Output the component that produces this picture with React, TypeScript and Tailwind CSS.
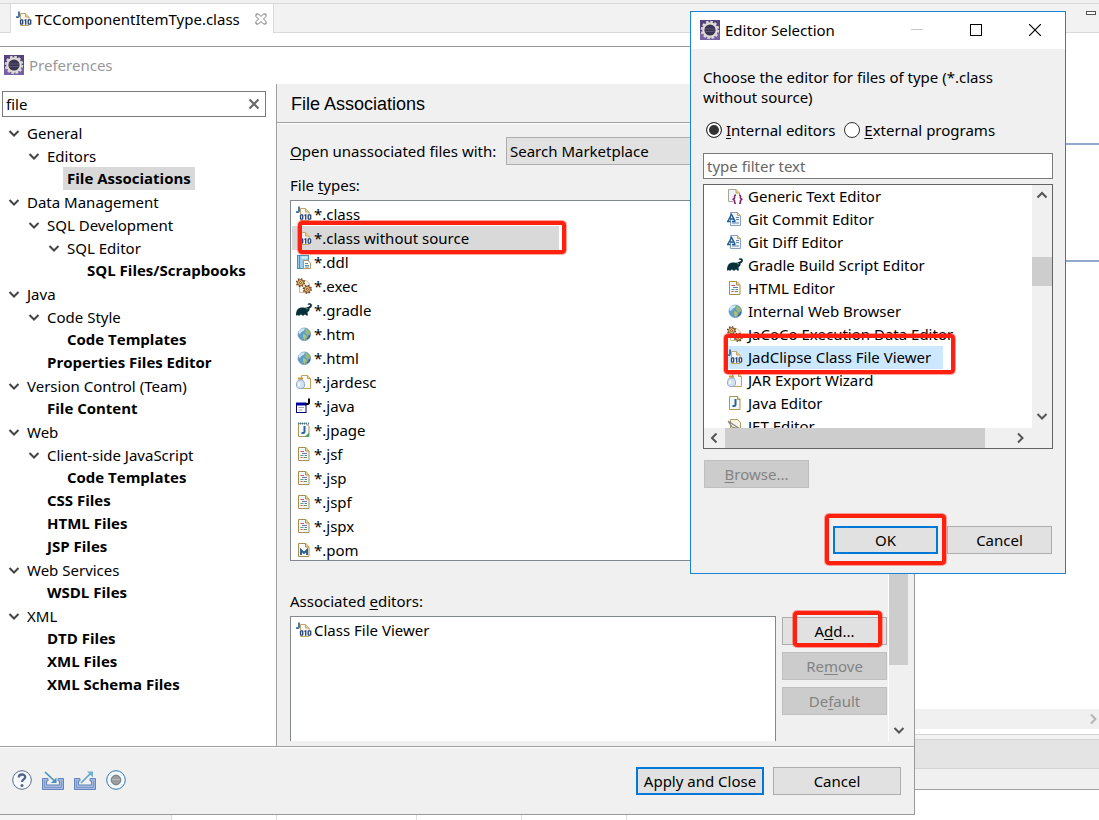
import React, { useState } from "react";

type IconProps = { className?: string };

function Svg({ children, className = "" }: { children: React.ReactNode; className?: string }) {
  return (
    <svg viewBox="0 0 16 16" className={`size-4 shrink-0 ${className}`} fill="none" aria-hidden="true">
      {children}
    </svg>
  );
}

function EclipseIcon() {
  return (
    <svg viewBox="0 0 20 20" className="size-5 shrink-0" aria-hidden="true">
      <rect width="20" height="20" fill="#54427c" />
      <rect y="13" width="20" height="7" fill="#7661a2" />
      <circle cx="10" cy="10" r="8.300" fill="none" stroke="#dcd9d4" strokeWidth="2" strokeDasharray="2.600 1.746" />
      <circle cx="10" cy="10" r="6.700" fill="#3a3352" stroke="#dedbd8" strokeWidth="2.200" />
      <path d="M5 9h10M5.300 11.500h9.400" stroke="#5d5775" strokeWidth="1" />
    </svg>
  );
}

function ClassIcon({ plain = false }: { plain?: boolean }) {
  return (
    <Svg>
      <path d="M4.500 14.500v-12H9.500l3.500 3.500v8.500z" fill="#f7f7fb" stroke="#c3a566" />
      <path d="M9.500 2.500v3.500h3.500" fill="#efd58d" stroke="#c3a566" />
      {!plain && <path d="M3 .5v4.500q0 1.500-3 1" stroke="#4779a8" strokeWidth="2" />}
      <rect x="4" y="8" width="12" height="6" fill="#eef1f8" />
      <g stroke="#29456f" strokeWidth="1.300">
        <rect x="4.500" y="8.800" width="2.200" height="4.400" rx=".7" />
        <path d="M8.500 9.500l1.200-.7v4.900" />
        <rect x="12.200" y="8.800" width="2.500" height="4.400" rx=".7" />
      </g>
    </Svg>
  );
}

function DdlIcon() {
  return (
    <Svg>
      <rect x="1.500" y="1.500" width="11" height="13" fill="#9dcce8" stroke="#4d8fbc" />
      <path d="M3.500 2v12" stroke="#4d8fbc" />
      <path d="M5.500 3.500h6" stroke="#d9f1fb" strokeWidth="2" />
      <path d="M7.500 6.500h4.500l2.500 2.500v5.500h-7z" fill="#fff" stroke="#b79952" />
      <path d="M9 9.500h3M9 11.500h4M9 13h4" stroke="#5988bd" />
    </Svg>
  );
}

function Gear({ x, y }: { x: number; y: number }) {
  return (
    <g fill="#f3c465" stroke="#6b3d22">
      <circle cx={x} cy={y} r="3.900" fill="none" strokeWidth="1.400" strokeDasharray="1.600 1.463" />
      <circle cx={x} cy={y} r="3" strokeWidth=".9" />
      <circle cx={x} cy={y} r="1" fill="#fff" strokeWidth=".9" />
    </g>
  );
}

function GearsIcon() {
  return (
    <Svg>
      <path d="M3.500 14.500v-12h6.500l3.500 3.500v8.500z" fill="#f8f6ee" stroke="#d2bd8c" />
      <Gear x={4.5} y={4.7} />
      <Gear x={11.3} y={11.3} />
    </Svg>
  );
}

function GradleIcon() {
  return (
    <Svg>
      <path
        d="M0 13.500c0-4 .8-6.500 3.500-7.500 2.500-.8 5 0 7-.6 1.500-.5 2.500-1.300 3.500-1.500.5-.8-.2-1.500-1-1.200-.6.200-1 .3-1.300-.3C12 1 15.700.8 15.900 3.200c.1 2-1.500 2.700-2.400 3.300.4 2-.7 3-2 3.500l.4 3.500H10c0-1.500-1.800-1.500-2 0H6c-.2-1.500-2-1.500-2.200 0H2c-.1-.8-.8-.8-1 0z"
        fill="#06303a"
      />
      <circle cx="11" cy="6.700" r=".6" fill="#cbd8da" />
    </Svg>
  );
}

function GlobeIcon() {
  return (
    <Svg>
      <circle cx="8.300" cy="8.300" r="6.300" fill="#5e9fc9" stroke="#7798ae" strokeWidth=".8" />
      <path d="M3 4.500c1.500-2 4-2.700 6-2.200L8 4.500 5.500 6 4 8 2.300 7z" fill="#c9e7f4" />
      <path d="M9.500 2.800l3.500 2 .8 3-2.300 1.500L9 6.800z" fill="#9db96a" />
      <path d="M7 7.800l3 1.500.8 2L8.500 14.200 7 11.300z" fill="#b8bf66" />
      <path d="M11 12.800c1.500-.8 2.500-2 2.900-3.500" stroke="#2c648f" strokeWidth="1.300" />
    </Svg>
  );
}

function JarIcon() {
  return (
    <Svg>
      <path d="M5.500 14.500v-13h6l3 3v10z" fill="#f8f9fc" stroke="#c2a15b" />
      <path d="M11.500 1.500v3h3" fill="#efd58d" stroke="#c2a15b" />
      <path d="M2.500 6C1 7.500.5 9 .5 11c0 2.500 1 3.500 4 3.500s4-1 4-3.500c0-2-.5-3.500-2-5z" fill="#d3e1f3" stroke="#8ea7cb" />
      <path d="M2 4.500h5" stroke="#c9983e" strokeWidth="2" />
      <path d="M3 8.500v3.500" stroke="#fff" strokeWidth="1.500" />
    </Svg>
  );
}

function JavaFileIcon() {
  return (
    <Svg>
      <rect x=".5" y="5.500" width="9.500" height="9" fill="#fff" stroke="#000080" />
      <path d="M0 6h10.500" stroke="#0000a0" strokeWidth="3" />
      <path d="M2.500 9.500h5.500M2.500 12h4" stroke="#a7a7a7" />
      <path d="M13 .5v4q0 2-3 1.500" stroke="#000" strokeWidth="2" />
    </Svg>
  );
}

function JavaPageIcon({ notebook = false }: { notebook?: boolean }) {
  return (
    <Svg>
      <path d="M2.500 14.500v-13h8l2.500 3v10z" fill="#f3f8fd" stroke="#b09452" />
      {notebook ? (
        <>
          <path d="M2 1.500h11" stroke="#4a7085" strokeWidth="2" strokeDasharray="1 1" />
          <path d="M8.500 15l4.500-4.500V15z" fill="#50a264" />
        </>
      ) : (
        <path d="M10.500 1.500v3h3" fill="#efd58d" stroke="#b09452" />
      )}
      <path d="M8.500 4v5.500q0 2-3 1.500" stroke="#2e6494" strokeWidth="2" />
    </Svg>
  );
}

function PageIcon() {
  return (
    <Svg>
      <path d="M2.500 14.500v-13h7.500l3 3.500v9.500z" fill="#f6f8fc" stroke="#a98e4c" />
      <path d="M9.500 1.500v3.500h3.500" fill="#efd58d" stroke="#a98e4c" />
      <path d="M4.500 5.500H8M4.500 11.500h2" stroke="#c65562" />
      <path d="M6 7.500h5M8.500 9.500H11" stroke="#667cae" />
      <path d="M4.500 9.500h3M7.500 11.500H11" stroke="#5a9c77" />
    </Svg>
  );
}

function PomIcon() {
  return (
    <Svg>
      <path d="M2.500 14.500v-13h7.500l3 3.500v9.500z" fill="#f6f8fc" stroke="#a98e4c" />
      <path d="M9.500 1.500v3.500h3.500" fill="#efd58d" stroke="#a98e4c" />
      <path d="M5 13V8l3 3 3-3v5" stroke="#285e91" strokeWidth="1.900" />
    </Svg>
  );
}

function GenericTextIcon() {
  return (
    <Svg>
      <path d="M1.500 13.500v-12h7.500l3.500 3.500v8.500z" fill="#edf4fb" stroke="#aaa58d" />
      <path d="M9 1.500v3.500h3.500" fill="#efd58d" stroke="#c2a15b" />
      <rect x="6" y="6.500" width="10" height="9.500" fill="#fff" />
      <path
        d="M9 7q-1.500 0-1.500 1.500v1.600l-1.300 1.200 1.300 1.200V14q0 1.500 1.500 1.500M12 7q1.500 0 1.500 1.500v1.600l1.300 1.200-1.300 1.200V14q0 1.500-1.500 1.500"
        stroke="#80286d"
        strokeWidth="1.600"
      />
    </Svg>
  );
}

function GitEditorIcon() {
  return (
    <Svg>
      <path d="M3.500 14.500v-13h7l3 3v10z" fill="#f1f5fb" stroke="#8ba0bf" />
      <path d="M10.500 1.500v3h3" fill="#efd58d" stroke="#c2a15b" />
      <path d="M9 6.500h3M9 8.500h3M5 12h7" stroke="#6585b0" />
      <path d="M0 10.500h3.500M5 10.500h3.500M1 10L4.500 3.500 8 10M3 8h3.500" fill="none" stroke="#235c92" strokeWidth="1.500" />
    </Svg>
  );
}

function JetIcon() {
  return (
    <Svg>
      <path d="M3.500 14.500v-13h7l3 3v10z" fill="#f7f4e9" stroke="#b29a60" />
      <path d="M1 3l12 8M1 3l4 6 7 2" stroke="#84877d" strokeWidth="1.200" />
    </Svg>
  );
}

type Dir = "down" | "up" | "left" | "right";
const chevronPaths: Record<Dir, string> = {
  down: "M1.500 4l4.500 4.500L10.500 4",
  up: "M1.500 8.500L6 4l4.500 4.500",
  left: "M8.500 1.500L4 6l4.500 4.500",
  right: "M4 1.500L8.500 6 4 10.500",
};

function Chevron({ dir, className = "text-[#555]" }: { dir: Dir } & IconProps) {
  return (
    <svg viewBox="0 0 12 12" className={`size-3 shrink-0 ${className}`} fill="none" aria-hidden="true">
      <path d={chevronPaths[dir]} stroke="currentColor" strokeWidth="2" />
    </svg>
  );
}

type TreeRow = { label: string; level: number; leaf?: boolean };
const tree: TreeRow[] = [
  { label: "General", level: 0 },
  { label: "Editors", level: 1 },
  { label: "File Associations", level: 2, leaf: true },
  { label: "Data Management", level: 0 },
  { label: "SQL Development", level: 1 },
  { label: "SQL Editor", level: 2 },
  { label: "SQL Files/Scrapbooks", level: 3, leaf: true },
  { label: "Java", level: 0 },
  { label: "Code Style", level: 1 },
  { label: "Code Templates", level: 2, leaf: true },
  { label: "Properties Files Editor", level: 1, leaf: true },
  { label: "Version Control (Team)", level: 0 },
  { label: "File Content", level: 1, leaf: true },
  { label: "Web", level: 0 },
  { label: "Client-side JavaScript", level: 1 },
  { label: "Code Templates", level: 2, leaf: true },
  { label: "CSS Files", level: 1, leaf: true },
  { label: "HTML Files", level: 1, leaf: true },
  { label: "JSP Files", level: 1, leaf: true },
  { label: "Web Services", level: 0 },
  { label: "WSDL Files", level: 1, leaf: true },
  { label: "XML", level: 0 },
  { label: "DTD Files", level: 1, leaf: true },
  { label: "XML Files", level: 1, leaf: true },
  { label: "XML Schema Files", level: 1, leaf: true },
];
const indents = ["pl-2", "pl-7", "pl-12", "pl-17"];

const fileTypes = [
  { label: "*.class", icon: <ClassIcon /> },
  { label: "*.class without source", icon: <ClassIcon plain /> },
  { label: "*.ddl", icon: <DdlIcon /> },
  { label: "*.exec", icon: <GearsIcon /> },
  { label: "*.gradle", icon: <GradleIcon /> },
  { label: "*.htm", icon: <GlobeIcon /> },
  { label: "*.html", icon: <GlobeIcon /> },
  { label: "*.jardesc", icon: <JarIcon /> },
  { label: "*.java", icon: <JavaFileIcon /> },
  { label: "*.jpage", icon: <JavaPageIcon notebook /> },
  { label: "*.jsf", icon: <PageIcon /> },
  { label: "*.jsp", icon: <PageIcon /> },
  { label: "*.jspf", icon: <PageIcon /> },
  { label: "*.jspx", icon: <PageIcon /> },
  { label: "*.pom", icon: <PomIcon /> },
];

const editors = [
  { label: "Generic Text Editor", icon: <GenericTextIcon /> },
  { label: "Git Commit Editor", icon: <GitEditorIcon /> },
  { label: "Git Diff Editor", icon: <GitEditorIcon /> },
  { label: "Gradle Build Script Editor", icon: <GradleIcon /> },
  { label: "HTML Editor", icon: <PageIcon /> },
  { label: "Internal Web Browser", icon: <GlobeIcon /> },
  { label: "JaCoCo Execution Data Editor", icon: <GearsIcon /> },
  { label: "JadClipse Class File Viewer", icon: <ClassIcon /> },
  { label: "JAR Export Wizard", icon: <JarIcon /> },
  { label: "Java Editor", icon: <JavaPageIcon /> },
  { label: "JET Editor", icon: <JetIcon /> },
];

function Button({
  children,
  kind = "normal",
  className = "w-[105px]",
}: {
  children: React.ReactNode;
  kind?: "normal" | "primary" | "disabled";
  className?: string;
}) {
  const look = {
    normal: "border border-[#adadad] bg-[#e1e1e1] text-black",
    primary: "border-2 border-[#0078d7] bg-[#e1e1e1] text-black",
    disabled: "border border-[#bfbfbf] bg-[#cccccc] text-[#838383]",
  }[kind];
  return (
    <button type="button" disabled={kind === "disabled"} className={`flex h-7 items-center justify-center whitespace-nowrap ${look} ${className}`}>
      {children}
    </button>
  );
}

function Key({ children }: { children: React.ReactNode }) {
  return <span className="underline underline-offset-2">{children}</span>;
}

function Mark({ className }: { className: string }) {
  return <div aria-hidden="true" className={`pointer-events-none absolute rounded-sm border-4 border-[#ff2010] ring-1 ring-[#ff2010]/40 ${className}`} />;
}

function Workbench() {
  return (
    <div className="flex min-h-screen flex-col bg-white">
      <div className="h-1 border-b border-[#d9d9d9] bg-[#f0f0f0]" />
      <div className="flex h-[29px] bg-[#f2f2f2]">
        <div className="w-2.5 border-b border-[#d9d9d9]" />
        <div className="flex items-center gap-[3px] border-x border-[#d9d9d9] bg-white pr-1.5 pl-[5px]">
          <ClassIcon />
          <span>TCComponentItemType.class</span>
          <button type="button" aria-label="Close tab" className="ml-3">
            <svg viewBox="0 0 12 12" className="size-3" fill="none" aria-hidden="true">
              <path d="M1 1h2.500L6 3.500 8.500 1H11v2.500L8.500 6 11 8.500V11H8.500L6 8.500 3.500 11H1V8.500L3.500 6 1 3.500z" stroke="#777" />
            </svg>
          </button>
        </div>
        <div className="flex flex-1 justify-end border-b border-[#d9d9d9]">
          <button type="button" aria-label="Minimize view" className="mt-[7px] mr-[3px] h-1 w-2.5 border border-[#555] bg-white" />
        </div>
      </div>
      <div className="h-[110px]" />
      <div className="h-0.5 bg-[#94a7d0]" />
      <div className="h-[115px]" />
      <div className="h-0.5 bg-[#94a7d0]" />
      <div className="h-[447px]" />
      <div className="flex h-5 items-center justify-end bg-[#f0f0f0]">
        <Chevron dir="right" className="text-[#b5b5b5]" />
      </div>
      <div className="h-[5px]" />
      <div className="h-[5px] border-t border-[#d4d4d4] bg-[#f2f2f2]" />
      <div className="h-[30px] border-y border-[#d4d4d4] bg-[#e4e4e4]" />
      <div className="h-[21px] border-b border-[#a0a0a0] bg-[#f0f0f0]" />
      <div className="flex min-h-[30px] flex-1 divide-x divide-[#dcdcdc]">
        <div className="w-43 shrink-0 bg-[#f5f5f5]" />
        <div className="w-[105px] shrink-0" />
        <div className="w-[140px] shrink-0" />
        <div className="w-[105px] shrink-0" />
        <div className="w-[105px] shrink-0" />
        <div className="flex-1" />
      </div>
    </div>
  );
}

function PreferenceTree() {
  const [query, setQuery] = useState("file");
  return (
    <aside className="w-[276px] shrink-0 pt-[7px]">
      <label className="mr-2.5 ml-0.5 flex h-[26px] items-center border border-[#7a7a7a] bg-white pr-[5px] pl-[3px]">
        <input aria-label="Filter" value={query} onChange={(e) => setQuery(e.target.value)} className="min-w-0 flex-1 outline-none" />
        <button type="button" aria-label="Clear" onClick={() => setQuery("")}>
          <svg viewBox="0 0 12 12" className="size-3" fill="none" aria-hidden="true">
            <path d="M1.500 1.500l9 9M10.500 1.500l-9 9" stroke="#6a6a6a" strokeWidth="2.200" />
          </svg>
        </button>
      </label>
      <ul className="pt-1">
        {tree.map((row, i) => (
          <li key={i} className={`flex h-[23px] items-center ${indents[row.level]}`}>
            <button type="button" className="flex h-full items-center">
              {row.leaf ? <span className="w-[15px]" /> : <Chevron dir="down" className="mr-[3px] text-[#444]" />}
              <span
                className={`flex h-full items-center px-1 whitespace-nowrap ${row.leaf ? "pb-0.5 font-['Open_Sans',sans-serif] font-bold" : ""} ${i === 2 ? "bg-[#d9d9d9]" : ""}`}
              >
                {row.label}
              </span>
            </button>
          </li>
        ))}
      </ul>
    </aside>
  );
}

function FileAssociations() {
  return (
    <main className="flex min-w-0 flex-1 flex-col border-l border-[#a0a0a0] bg-[#f0f0f0]">
      <h1 className="flex h-10 items-center border-b border-[#a0a0a0] pt-0.5 pl-3.5 font-['Liberation_Sans',sans-serif] text-lg leading-5">File Associations</h1>
      <div className="flex flex-1 border-t border-white">
        <div className="flex min-w-0 flex-1 flex-col pl-[13px]">
          <div className="flex items-center gap-1 pt-[13px]">
            <label htmlFor="unassociated" className="w-53 shrink-0 whitespace-nowrap">
              <Key>O</Key>pen unassociated files with:
            </label>
            <select id="unassociated" className="h-7 min-w-0 flex-1 appearance-none border border-[#adadad] bg-[#e1e1e1] px-[3px]">
              <option>Search Marketplace</option>
            </select>
          </div>
          <h2 className="mt-2.5 mb-[5px] h-5 leading-5">
            File <Key>t</Key>ypes:
          </h2>
          <div className="relative mr-28">
            <ul className="h-[361px] overflow-hidden border border-[#828790] bg-white py-px pl-px">
              {fileTypes.map((t, i) => (
                <li key={t.label}>
                  <button type="button" className={`flex h-6 items-center gap-0.5 pl-1 ${i === 1 ? "w-[267px] bg-[#d9d9d9]" : ""}`}>
                    {t.icon}
                    {t.label}
                  </button>
                </li>
              ))}
            </ul>
            <Mark className="top-[21px] left-2 h-[33px] w-[268px]" />
          </div>
          <h2 className="mt-[30px] mb-[5px] h-5 leading-5">
            Associated <Key>e</Key>ditors:
          </h2>
          <div className="flex flex-1 gap-1.5">
            <ul className="flex-1 border border-b-0 border-[#828790] bg-white py-px pl-px">
              <li>
                <button type="button" className="flex h-6 items-center gap-0.5 pl-1">
                  <ClassIcon />
                  Class File Viewer
                </button>
              </li>
            </ul>
            <div className="relative flex flex-col gap-[7px] pt-px pr-px">
              <Button>
                <span>
                  A<Key>d</Key>d...
                </span>
              </Button>
              <Button kind="disabled">
                <span>
                  Re<Key>m</Key>ove
                </span>
              </Button>
              <Button kind="disabled">
                <span>
                  De<Key>f</Key>ault
                </span>
              </Button>
              <Mark className="-top-[5px] left-[11px] h-9 w-[89px]" />
            </div>
          </div>
        </div>
        <div className="flex w-5 shrink-0 flex-col items-center border-l border-white">
          <div className="h-[541px] w-full bg-[#cdcdcd]" />
          <button type="button" aria-label="Scroll down" className="mt-[59px] mb-[5px]">
            <Chevron dir="down" />
          </button>
        </div>
        <div className="w-1.5" />
      </div>
    </main>
  );
}

function PreferencesWindow() {
  return (
    <section className="absolute top-[46px] right-46 left-0 flex flex-col border-y border-r border-[#999] bg-white">
      <header className="flex h-[37px] items-center gap-[5px] pb-0.5 pl-1 text-[#999]">
        <EclipseIcon />
        Preferences
      </header>
      <div className="flex h-[657px]">
        <PreferenceTree />
        <FileAssociations />
      </div>
      <div className="h-[5px] pl-[276px]">
        <div className="h-full border-l border-[#a0a0a0] bg-[#f0f0f0]" />
      </div>
      <footer className="flex h-[68px] items-center gap-[9px] border-t border-[#a0a0a0] bg-[#f0f0f0] pr-[13px] pl-3 shadow-[inset_0_1px_0_white]">
        <div className="flex items-center gap-2.5 pb-0.5">
          <button type="button" aria-label="Help">
            <svg viewBox="0 0 20 20" className="size-5" fill="none" aria-hidden="true">
              <circle cx="10" cy="10" r="9.300" fill="#f6f9fd" stroke="#5c6c8c" />
              <path d="M6.800 7.500c0-4 6.400-3.800 6.400-.5 0 2.500-3.200 2.300-3.200 5" stroke="#53648b" strokeWidth="2.300" />
              <circle cx="10" cy="15.500" r="1.500" fill="#53648b" />
            </svg>
          </button>
          {["Import", "Export"].map((name) => (
            <button key={name} type="button" aria-label={name}>
              <svg viewBox="0 0 22 20" className="h-5 w-[22px]" fill="none" aria-hidden="true">
                <path d="M.5 8.500H6v2.500H4.500v4h13v-4H16V8.500h5.500v11H.5z" fill="#a3b9df" stroke="#6585bd" />
                <path d="M2.500 10.500v7h17v-7" stroke="#7c98ca" />
                {name === "Import" ? (
                  <>
                    <path d="M3 2l9 8.500" stroke="#4594bd" strokeWidth="1.700" />
                    <path d="M14.500 7.500V13H9z" fill="#4594bd" />
                  </>
                ) : (
                  <>
                    <path d="M7 13l9.500-9.500" stroke="#5fa5cb" strokeWidth="1.700" />
                    <path d="M13 1.500h6v6z" fill="#6eafd2" />
                  </>
                )}
              </svg>
            </button>
          ))}
          <button type="button" aria-label="Oomph recorder">
            <svg viewBox="0 0 20 20" className="size-5" aria-hidden="true">
              <circle cx="10" cy="10" r="9.300" fill="#eff8fe" stroke="#3877ac" />
              <circle cx="10" cy="10" r="4.800" fill="#9b9b9b" stroke="#777" />
              <path d="M6 9.500h8" stroke="#bbb" />
            </svg>
          </button>
        </div>
        <div className="ml-auto flex gap-[9px]">
          <Button kind="primary" className="w-32">
            Apply and Close
          </Button>
          <Button className="w-32">Cancel</Button>
        </div>
      </footer>
    </section>
  );
}

function Radio({ id, checked, onSelect, children }: { id: string; checked: boolean; onSelect: () => void; children: React.ReactNode }) {
  return (
    <span className="flex items-center gap-1">
      <input
        type="radio"
        name="source"
        id={id}
        checked={checked}
        onChange={onSelect}
        className="size-4 appearance-none rounded-full border border-[#333] bg-white checked:bg-[#333] checked:shadow-[inset_0_0_0_2px_white]"
      />
      <label htmlFor={id} className="whitespace-nowrap">
        {children}
      </label>
    </span>
  );
}

function EditorSelection() {
  const [source, setSource] = useState("internal");
  return (
    <section className="absolute top-[11px] right-[33px] flex w-94 flex-col border border-[#1883d7] bg-[#f0f0f0]">
      <header className="flex h-[37px] items-center bg-white pb-0.5 pl-[9px]">
        <EclipseIcon />
        <h1 className="ml-[5px] flex-1">Editor Selection</h1>
        <div className="flex items-center gap-[47px] pr-6">
          <button type="button" disabled aria-label="Minimize" className="h-px w-3 bg-[#c8c8c8]" />
          <button type="button" aria-label="Maximize" className="size-3 border border-black" />
          <button type="button" aria-label="Close">
            <svg viewBox="0 0 12 12" className="size-3" aria-hidden="true">
              <path d="M0 0l12 12M12 0L0 12" stroke="#000" strokeWidth="1.200" />
            </svg>
          </button>
        </div>
      </header>
      <div className="flex flex-col px-3 pt-[18px] pb-[19px]">
        <p className="pr-8 leading-5">Choose the editor for files of type (*.class without source)</p>
        <div className="mt-[13px] flex h-5 items-center gap-[9px] pl-[3px]">
          <Radio id="internal" checked={source === "internal"} onSelect={() => setSource("internal")}>
            <Key>I</Key>nternal editors
          </Radio>
          <Radio id="external" checked={source === "external"} onSelect={() => setSource("external")}>
            <Key>E</Key>xternal programs
          </Radio>
        </div>
        <input aria-label="Filter editors" placeholder="type filter text" className="mt-[13px] h-[26px] border border-[#7a7a7a] bg-white px-[3px] placeholder-[#666] outline-none" />
        <div className="relative mt-[5px] flex h-[265px] flex-col border border-[#646464] bg-white">
          <div className="flex min-h-0 flex-1">
            <ul className="flex-1 overflow-hidden pl-[23px]">
              {editors.map((e, i) => (
                <li key={e.label}>
                  <button
                    type="button"
                    className={`flex h-[23px] items-center gap-[5px] pb-0.5 whitespace-nowrap ${i === 7 ? "w-54 bg-[#cce8ff]" : ""}`}
                  >
                    {e.icon}
                    {e.label}
                  </button>
                </li>
              ))}
            </ul>
            <div className="flex w-5 flex-col items-center bg-[#f0f0f0] pt-1 pb-1.5">
              <Chevron dir="up" />
              <div className="mt-14 mb-auto h-[29px] w-full bg-[#cdcdcd]" />
              <Chevron dir="down" />
            </div>
          </div>
          <div className="flex h-5 items-center bg-[#f0f0f0] pr-[26px] pl-1">
            <Chevron dir="left" />
            <div className="mr-auto ml-[5px] h-full w-65 bg-[#cdcdcd]" />
            <Chevron dir="right" />
          </div>
          <Mark className="top-[149px] left-5 h-10 w-[231px]" />
        </div>
        <div className="mt-[11px] pl-px">
          <Button kind="disabled">
            <span>
              <Key>B</Key>rowse...
            </span>
          </Button>
        </div>
        <div className="relative mt-[38px] mr-px flex justify-end gap-[9px]">
          <Button kind="primary">OK</Button>
          <Button>Cancel</Button>
          <Mark className="-top-3 right-[106px] h-[51px] w-[121px]" />
        </div>
      </div>
    </section>
  );
}

export default function App() {
  return (
    <div className="relative min-h-screen overflow-hidden bg-white font-['Noto_Sans','Open_Sans',sans-serif] text-[15px] leading-5 text-black">
      <Workbench />
      <PreferencesWindow />
      <EditorSelection />
    </div>
  );
}
